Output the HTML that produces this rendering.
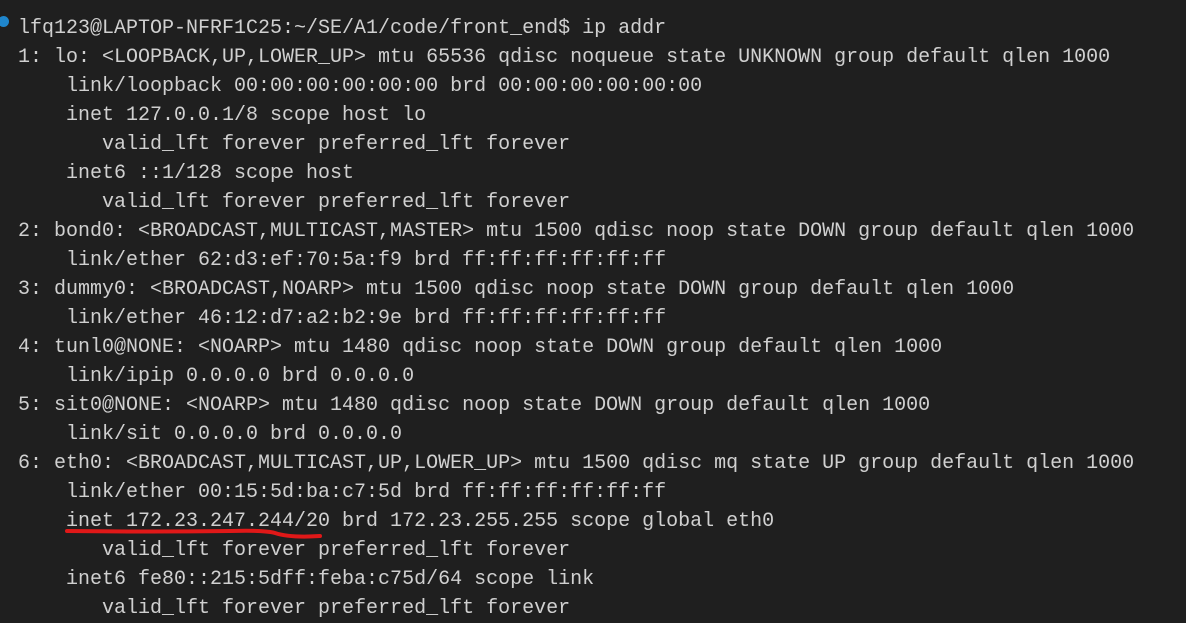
<!DOCTYPE html>
<html><head><style>
html,body{margin:0;padding:0;background:#1f1f1f;width:1186px;height:620px;overflow:hidden}
pre{margin:0;position:absolute;left:18px;top:14px;font-family:"Liberation Mono",monospace;font-size:20px;line-height:29px;color:#d0d0d0;white-space:pre}
.dot{position:absolute;left:-2px;top:16px;width:11px;height:11px;border-radius:50%;background:#1f86cc}
</style></head><body>
<div class="dot"></div>
<pre>lfq123@LAPTOP-NFRF1C25:~/SE/A1/code/front_end$ ip addr
1: lo: &lt;LOOPBACK,UP,LOWER_UP&gt; mtu 65536 qdisc noqueue state UNKNOWN group default qlen 1000
    link/loopback 00:00:00:00:00:00 brd 00:00:00:00:00:00
    inet 127.0.0.1/8 scope host lo
       valid_lft forever preferred_lft forever
    inet6 ::1/128 scope host
       valid_lft forever preferred_lft forever
2: bond0: &lt;BROADCAST,MULTICAST,MASTER&gt; mtu 1500 qdisc noop state DOWN group default qlen 1000
    link/ether 62:d3:ef:70:5a:f9 brd ff:ff:ff:ff:ff:ff
3: dummy0: &lt;BROADCAST,NOARP&gt; mtu 1500 qdisc noop state DOWN group default qlen 1000
    link/ether 46:12:d7:a2:b2:9e brd ff:ff:ff:ff:ff:ff
4: tunl0@NONE: &lt;NOARP&gt; mtu 1480 qdisc noop state DOWN group default qlen 1000
    link/ipip 0.0.0.0 brd 0.0.0.0
5: sit0@NONE: &lt;NOARP&gt; mtu 1480 qdisc noop state DOWN group default qlen 1000
    link/sit 0.0.0.0 brd 0.0.0.0
6: eth0: &lt;BROADCAST,MULTICAST,UP,LOWER_UP&gt; mtu 1500 qdisc mq state UP group default qlen 1000
    link/ether 00:15:5d:ba:c7:5d brd ff:ff:ff:ff:ff:ff
    inet 172.23.247.244/20 brd 172.23.255.255 scope global eth0
       valid_lft forever preferred_lft forever
    inet6 fe80::215:5dff:feba:c75d/64 scope link
       valid_lft forever preferred_lft forever</pre>
<svg width="1186" height="620" style="position:absolute;left:0;top:0">
<path d="M67 531 Q150 532 230 531 Q265 530 275 533 Q290 538 320 536" stroke="#e01818" stroke-width="4" fill="none" stroke-linecap="round"/>
</svg>
</body></html>
